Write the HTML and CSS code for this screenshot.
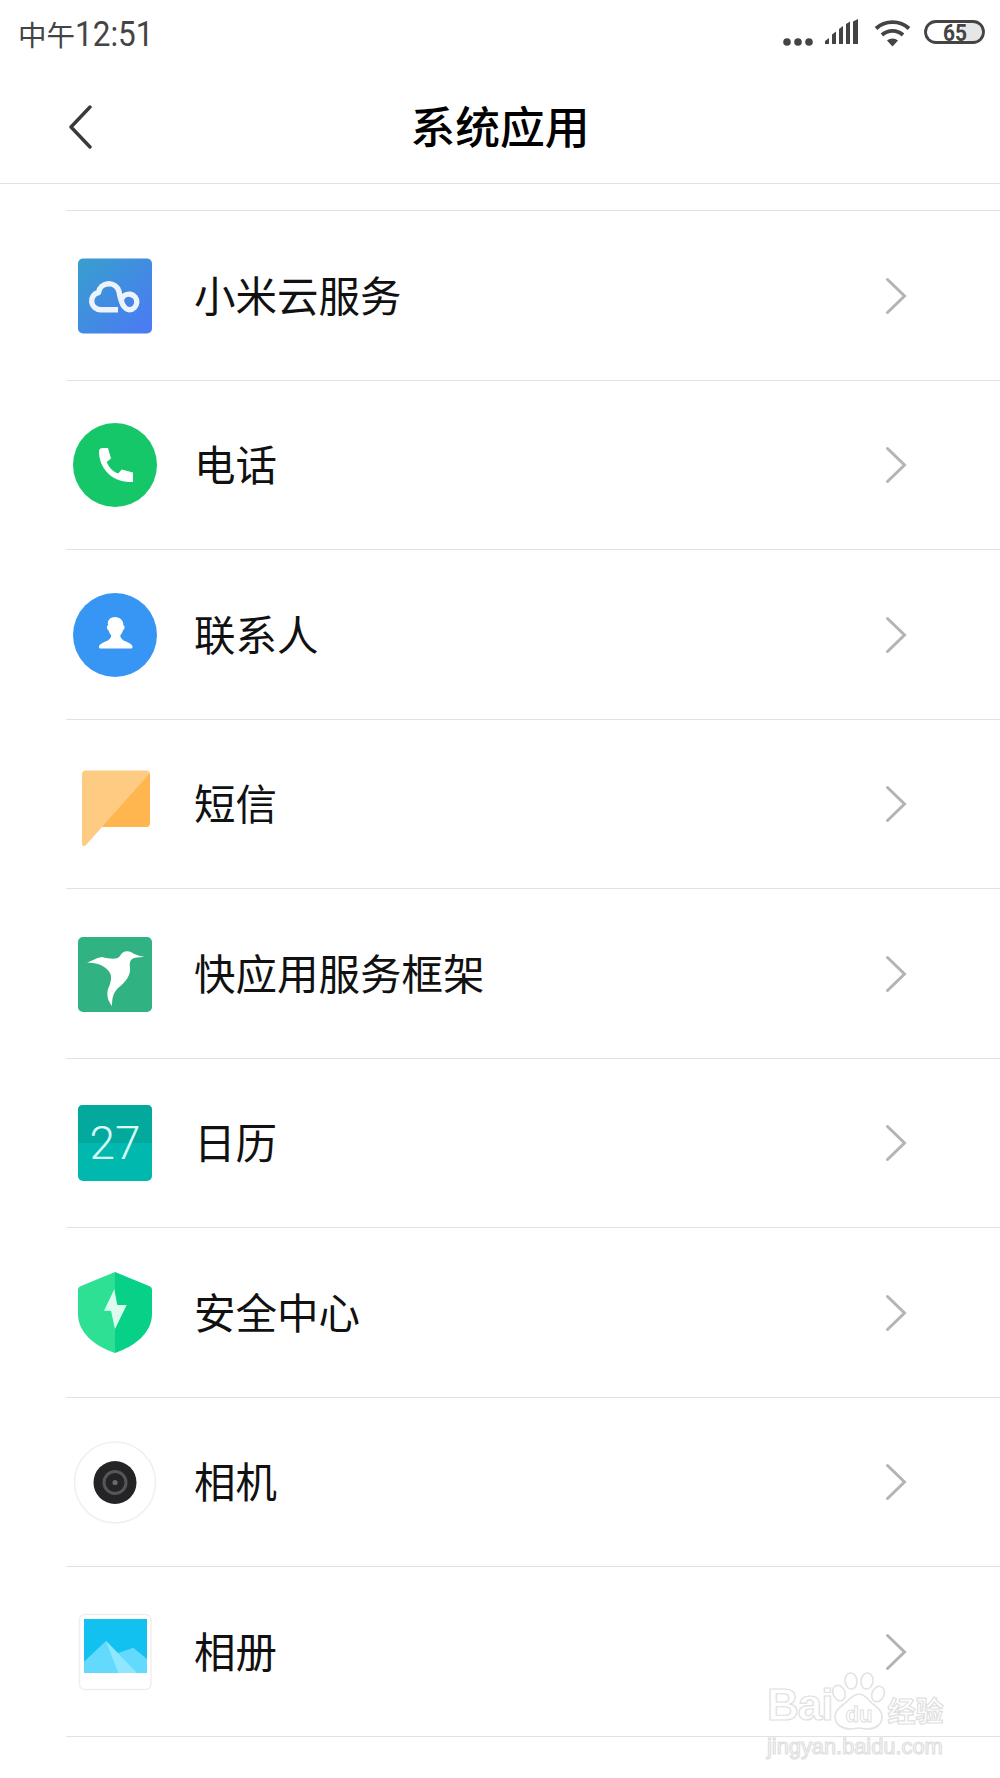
FILE: index.html
```html
<!DOCTYPE html>
<html lang="zh-CN">
<head>
<meta charset="utf-8">
<title>系统应用</title>
<link rel="stylesheet" href="styles.css">
</head>
<body>
<div class="page">
  <header class="status">
    <div class="time"><span class="time-cjk">中午</span><span class="time-num">12:51</span></div>
    <div class="status-icons">
      <svg class="ic-dots" width="30" height="10" viewBox="0 0 30 10"><circle cx="4" cy="5" r="3.8"/><circle cx="15" cy="5" r="3.8"/><circle cx="26" cy="5" r="3.8"/></svg>
      <svg class="ic-signal" width="34" height="26" viewBox="0 0 34 26"><path d="M0 25v-3l4-3v6zM7 25V15.500l4-3V25zM14 25V10l4-3v18zM21 25V5l4-2.500V25zM28 25V2.500L33 0v25z"/></svg>
      <svg class="ic-wifi" width="37" height="28" viewBox="0 0 37 28"><g fill="none" stroke="#444" stroke-width="3.800"><path d="M2 9.500C11 1 26 1 35 9.500"/><path d="M8 16c6-5.500 15-5.500 21 0"/></g><path d="M13 21.500c3-2.800 8-2.800 11 0L18.500 27.500z" fill="#444"/></svg>
      <svg class="ic-batt" width="61" height="24" viewBox="0 0 61 24"><rect x="36" y="3" width="22" height="18" rx="9" fill="#e6e6e6"/><rect x="1.500" y="1.500" width="58" height="21" rx="10.500" fill="none" stroke="#444" stroke-width="2.800"/><text x="19" y="21" textLength="24" lengthAdjust="spacingAndGlyphs" class="batt-text">65</text></svg>
    </div>
  </header>

  <nav class="nav">
    <svg class="back" width="26" height="44" viewBox="0 0 26 44"><path d="M23 2 4 22l19 20" fill="none" stroke="#3a3a3a" stroke-width="3.400" stroke-linecap="round" stroke-linejoin="round"/></svg>
    <h1 class="title">系统应用</h1>
  </nav>

  <ul class="list">
    <li class="row">
      <svg class="app" viewBox="0 0 98 98"><defs><linearGradient id="cl" x1="0" y1="0" x2="1" y2="1"><stop offset="0" stop-color="#389fce"/><stop offset="1" stop-color="#4b79f5"/></linearGradient></defs><rect x="12" y="11.500" width="74" height="75" rx="5" fill="url(#cl)"/><path d="M52 62.700H34.500a8.700 8.700 0 0 1-2-17.200 10.500 10.500 0 0 1 20.500-1C54 50 55 56 58 59.500c1.500 2 3.500 3.200 5.300 3.200a7.800 7.800 0 1 0-7.800-9.900" fill="none" stroke="#edf3fb" stroke-width="5.400" stroke-linejoin="round"/></svg>
      <span class="label">小米云服务</span>
      <svg class="chev" width="22" height="38" viewBox="0 0 22 38"><path d="M2.500 2.500 19.500 19l-17 16.500"/></svg>
    </li>
    <li class="row">
      <svg class="app" viewBox="0 0 98 98"><circle cx="49" cy="49" r="42" fill="#15c768"/><path d="M33 35.500q0-3.500 3.500-3.500H42l3 10.500-4.200 3.500c2 5.500 6.200 9.800 11.500 11.600l3.400-4.100L67 56.500V66h-3.500C46 66 33 52 33 35.500z" fill="#fff"/></svg>
      <span class="label">电话</span>
      <svg class="chev" width="22" height="38" viewBox="0 0 22 38"><path d="M2.500 2.500 19.500 19l-17 16.500"/></svg>
    </li>
    <li class="row">
      <svg class="app" viewBox="0 0 98 98"><circle cx="49" cy="49" r="42" fill="#3796f3"/><path d="M49 31c5 0 8.500 3.500 8.500 8.500 1.500 0 1.500 3.500-.5 4.800-.5 2-1.500 3.700-2.700 5 .2 3.500 2.300 4.700 5.700 6.300 3.500 1.600 6.500 3 6.500 5.400 0 1-.8 1.500-2 1.500H35c-1.200 0-2-.5-2-1.500 0-2.400 3-3.800 6.500-5.400 3.400-1.600 5.500-2.800 5.700-6.300-1.200-1.300-2.200-3-2.700-5-2-1.300-2-4.800-.5-4.800C41 34.500 44 31 49 31z" fill="#fff"/></svg>
      <span class="label">联系人</span>
      <svg class="chev" width="22" height="38" viewBox="0 0 22 38"><path d="M2.500 2.500 19.500 19l-17 16.500"/></svg>
    </li>
    <li class="row">
      <svg class="app" viewBox="0 0 98 98"><path d="M20 15.500h60q4 0 4 4V68q0 4-4 4H36L20 90q-4 3-4-2V19.500q0-4 4-4z" fill="#fdcb82"/><path d="M84 18V68q0 4-4 4H36z" fill="#ffb64f"/></svg>
      <span class="label">短信</span>
      <svg class="chev" width="22" height="38" viewBox="0 0 22 38"><path d="M2.500 2.500 19.500 19l-17 16.500"/></svg>
    </li>
    <li class="row">
      <svg class="app" viewBox="0 0 98 98"><rect x="12" y="12" width="74" height="75" rx="5" fill="#31b282"/><path d="M79 31.700C72 31 68 29 65 27 60 25 56 27 54 31 51 35 44 34 36 32 30 33 25 36 21 38 30 37 40 41 44 48 46 52 45 58 42 64 40 72 43 77 46 81 46 74 47 68 52 63 60 57 65 50 64 42 63 37 65 34 68 33 72 32 76 32 79 31.700z" fill="#fff"/></svg>
      <span class="label">快应用服务框架</span>
      <svg class="chev" width="22" height="38" viewBox="0 0 22 38"><path d="M2.500 2.500 19.500 19l-17 16.500"/></svg>
    </li>
    <li class="row">
      <svg class="app" viewBox="0 0 98 98"><rect x="12" y="11" width="74" height="76" rx="5" fill="#00b8ae"/><path d="M12 49V16q0-5 5-5h64q5 0 5 5v33z" fill="#04a99d"/><text x="49" y="65" class="cal-text">27</text></svg>
      <span class="label">日历</span>
      <svg class="chev" width="22" height="38" viewBox="0 0 22 38"><path d="M2.500 2.500 19.500 19l-17 16.500"/></svg>
    </li>
    <li class="row">
      <svg class="app" viewBox="0 1 98 98"><path d="M49 9 15 23q-3 1-3 4v24c0 18 16 32 37 39z" fill="#2ee094"/><path d="M49 9l34 14q3 1 3 4v24c0 18-16 32-37 39z" fill="#07d186"/><path d="M48.300 26.300 38 47.700h7L49 66l11.700-24h-9.400z" fill="#dcfcef"/></svg>
      <span class="label">安全中心</span>
      <svg class="chev" width="22" height="38" viewBox="0 0 22 38"><path d="M2.500 2.500 19.500 19l-17 16.500"/></svg>
    </li>
    <li class="row">
      <svg class="app" viewBox="0 0 98 98"><circle cx="49" cy="49.500" r="40.500" fill="#fff" stroke="#f0f0f0" stroke-width="1.500"/><circle cx="49" cy="49.500" r="21.500" fill="#242426"/><circle cx="49" cy="49.500" r="11" fill="none" stroke="#56565a" stroke-width="3"/><circle cx="49" cy="49.500" r="2.600" fill="#6a6a6e"/></svg>
      <span class="label">相机</span>
      <svg class="chev" width="22" height="38" viewBox="0 0 22 38"><path d="M2.500 2.500 19.500 19l-17 16.500"/></svg>
    </li>
    <li class="row">
      <svg class="app" viewBox="0 0 98 98"><rect x="13.500" y="11.500" width="71.500" height="75" rx="5" fill="#fff" stroke="#efefef" stroke-width="1.500"/><rect x="18" y="16" width="63" height="54" fill="#13c1f0"/><path d="M18 58.700 40 38 52 50 67.300 44.700 81 56v14H18z" fill="#63dafd"/><path d="M40 38 71 70H52.300z" fill="#8fe6ff"/></svg>
      <span class="label">相册</span>
      <svg class="chev" width="22" height="38" viewBox="0 0 22 38"><path d="M2.500 2.500 19.500 19l-17 16.500"/></svg>
    </li>
  </ul>

  <div class="mark">
    <div class="mark-top">
      <span class="mark-bai">Bai</span>
      <svg class="mark-paw" width="56" height="58" viewBox="0 0 56 58"><g fill="#fff" fill-opacity=".7" stroke="#e2e2e2" stroke-width="1.600"><ellipse cx="8" cy="21" rx="6" ry="8" transform="rotate(-25 8 21)"/><ellipse cx="20" cy="9" rx="6" ry="8" transform="rotate(-8 20 9)"/><ellipse cx="36" cy="9" rx="6" ry="8" transform="rotate(8 36 9)"/><ellipse cx="47" cy="22" rx="6" ry="8" transform="rotate(25 47 22)"/><path d="M28 22c6 0 9 6 14 10 6 4 9 8 9 13 0 8-7 12-14 12-4 0-6-1-9-1s-5 1-9 1C12 57 4 53 4 45c0-5 3-9 9-13 5-4 9-10 15-10z"/></g><text x="28" y="50" class="mark-du">du</text></svg>
      <span class="mark-cn">经验</span>
    </div>
    <div class="mark-url">jingyan.baidu.com</div>
  </div>
</div>
</body>
</html>
```
FILE: styles.css
```css
* { box-sizing: border-box; }
html, body { margin: 0; padding: 0; background: #fff; }
.page {
  position: relative;
  width: 1000px;
  height: 1778px;
  overflow: hidden;
  background: #fff;
  font-family: "Noto Sans CJK SC", "Noto Sans", sans-serif;
}
.status {
  height: 70px;
  display: flex;
  justify-content: space-between;
  align-items: flex-start;
  padding: 14px 15px 0 18px;
}
.time {
  width: 140px;
  font-family: Roboto, "Noto Sans CJK SC", sans-serif;
  font-size: 35px;
  line-height: 40px;
  color: #444;
  white-space: nowrap;
}
.time-cjk { font-family: "Noto Sans CJK SC", sans-serif; font-size: 28.5px; }
.time-num { display: inline-block; transform: scaleX(.9); transform-origin: left center; }
.status-icons { display: flex; align-items: flex-start; padding-top: 5px; }
.status-icons svg { display: block; fill: #444; overflow: visible; }
.ic-dots { margin-top: 18px; margin-right: 12px; }
.ic-signal { margin-top: 0; margin-right: 15px; }
.ic-wifi { margin-top: 0; margin-right: 13px; }
.ic-batt { margin-top: 1px; }
.batt-text {
  font-family: Roboto, sans-serif;
  font-size: 24px;
  font-weight: 700;
  fill: #444;
}
.nav {
  position: relative;
  height: 114px;
  display: flex;
  align-items: center;
  justify-content: center;
  padding-bottom: 3px;
  border-bottom: 1px solid #e2e2e2;
}
.back { position: absolute; left: 67px; top: 35px; }
.title {
  margin: 0;
  font-size: 44.8px;
  line-height: 60px;
  font-weight: 500;
  color: #000;
}
.list {
  list-style: none;
  margin: 26px 0 0 66px;
  padding: 0;
  border-top: 1px solid #e2e2e2;
}
.row {
  height: 169.5px;
  display: flex;
  align-items: center;
  border-bottom: 1px solid #e2e2e2;
}
.app { width: 98px; height: 98px; flex: none; margin: 1px 30px 0 0; }
.label {
  flex: 1;
  font-size: 41.5px;
  line-height: 56px;
  padding-bottom: 3px;
  color: #111;
}
.chev { flex: none; margin: 1px 93px 0 0; }
.chev path {
  fill: none;
  stroke: #b4b4b4;
  stroke-width: 3;
  stroke-linecap: round;
  stroke-linejoin: miter;
}
.cal-text {
  font-family: Roboto, sans-serif;
  font-size: 46px;
  font-weight: 300;
  fill: #d8fbf6;
  text-anchor: middle;
}
.mark {
  position: absolute;
  left: 767px;
  top: 1672px;
  width: 182px;
}
.mark-top { display: flex; align-items: flex-end; height: 58px; }
.mark-bai, .mark-cn, .mark-url {
  color: rgba(255, 255, 255, .7);
  -webkit-text-stroke: 1.2px #e0e0e0;
}
.mark-bai {
  font-family: "Liberation Sans", sans-serif;
  font-size: 44px;
  line-height: 50px;
  font-weight: 700;
  letter-spacing: -1px;
}
.mark-paw { display: block; flex: none; margin-left: -1px; overflow: visible; }
.mark-du {
  font-family: "Liberation Sans", sans-serif;
  font-size: 22px;
  font-weight: 700;
  text-anchor: middle;
  fill: rgba(255, 255, 255, .7);
  stroke: #e0e0e0;
  stroke-width: 1;
}
.mark-cn { font-size: 28px; line-height: 40px; font-weight: 700; white-space: nowrap; }
.mark-url {
  margin-top: 3px;
  font-family: "Liberation Sans", sans-serif;
  font-size: 21.8px;
  line-height: 28px;
  white-space: nowrap;
}
```
